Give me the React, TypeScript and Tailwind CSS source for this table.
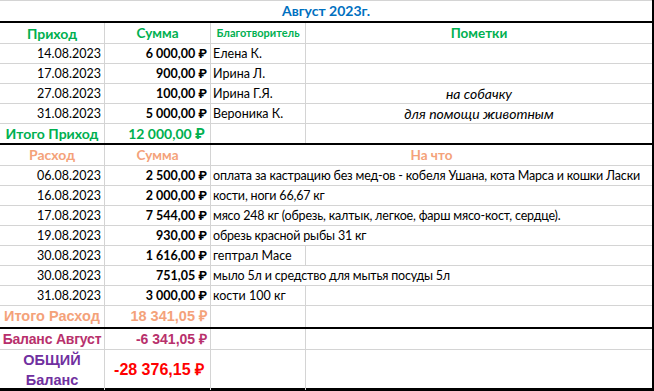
import React from "react";

const CAL = "font-['Lato','Roboto',sans-serif]";
const ARI = "font-['Liberation_Sans',Arial,sans-serif]";
const G = "border-[#d4d4d4]";
const COLS = "grid grid-cols-[105px_106px_95px_346px]";

const income = [
  ["14.08.2023", "6 000,00 ₽", "Елена К.", ""],
  ["17.08.2023", "900,00 ₽", "Ирина Л.", ""],
  ["27.08.2023", "100,00 ₽", "Ирина Г.Я.", "на собачку"],
  ["31.08.2023", "5 000,00 ₽", "Вероника К.", "для помощи животным"],
];

const expenses: [string, string, string, boolean][] = [
  ["06.08.2023", "2 500,00 ₽", "оплата за кастрацию без мед-ов - кобеля Ушана, кота Марса и кошки Ласки", true],
  ["16.08.2023", "2 000,00 ₽", "кости, ноги 66,67 кг", true],
  ["17.08.2023", "7 544,00 ₽", "мясо 248 кг (обрезь, калтык, легкое, фарш мясо-кост, сердце).", true],
  ["19.08.2023", "930,00 ₽", "обрезь красной рыбы 31 кг", true],
  ["30.08.2023", "1 616,00 ₽", "гептрал Масе", false],
  ["30.08.2023", "751,05 ₽", "мыло 5л и средство для мытья посуды 5л", true],
  ["31.08.2023", "3 000,00 ₽", "кости 100 кг", false],
];

export default function App() {
  return (
    <div className={`w-[654px] h-[391px] bg-white text-black ${CAL} overflow-hidden`}>
      <div className="w-[654px] border-r-2 border-black">
        {/* title */}
        <div className={`h-[23px] border-t ${G} border-b-2 border-b-black flex items-end justify-center pb-[2px]`}>
          <span className="text-[14px] font-bold text-[#0070c0] leading-none pb-[1px]">Август 2023г.</span>
        </div>
        {/* income header */}
        <div className={`${COLS} h-[21px] border-b ${G} text-[#00b050] font-bold`}>
          <div className={`border-r ${G} flex items-center justify-center text-[14px]`}>Приход</div>
          <div className={`border-r ${G} flex items-center justify-center text-[13.5px]`}>Сумма</div>
          <div className={`border-r ${G} flex items-center justify-center text-[11px] whitespace-nowrap`}>Благотворитель</div>
          <div className="flex items-center justify-center text-[13.5px]">Пометки</div>
        </div>
        {income.map((r, i) => (
          <div key={i} className={`${COLS} h-[20px] border-b ${G} text-[12.5px] leading-[19px]`}>
            <div className={`border-r ${G} text-right pr-[3px]`}>{r[0]}</div>
            <div className={`border-r ${G} text-right pr-[3px] font-bold`}>{r[1]}</div>
            <div className={`border-r ${G} pl-[2px] whitespace-nowrap`}>{r[2]}</div>
            <div className="text-center italic text-[14px]">{r[3]}</div>
          </div>
        ))}
        {/* total income */}
        <div className={`${COLS} h-[21px] border-b-2 border-black text-[#00b050] font-bold text-[14px] leading-[19px]`}>
          <div className={`border-r ${G} text-center whitespace-nowrap`}>Итого Приход</div>
          <div className={`border-r ${G} text-right pr-[5px] whitespace-nowrap`}>12 000,00 ₽</div>
          <div className={`border-r ${G}`}></div>
          <div></div>
        </div>
        {/* expense header */}
        <div className={`${COLS} h-[21px] border-b ${G} text-[#f4a27a] font-bold text-[13.5px] leading-[20px]`}>
          <div className={`border-r ${G} text-center text-[14px]`}>Расход</div>
          <div className={`border-r ${G} text-center`}>Сумма</div>
          <div className="col-span-2 text-center">На что</div>
        </div>
        {expenses.map((r, i) => (
          <div key={i} className={`${COLS} h-[20px] border-b ${G} text-[12.5px] leading-[19px]`}>
            <div className={`border-r ${G} text-right pr-[3px]`}>{r[0]}</div>
            <div className={`border-r ${G} text-right pr-[3px] font-bold`}>{r[1]}</div>
            {r[3] ? (
              <div className="col-span-2 pl-[2px] whitespace-nowrap tracking-[-0.18px]">{r[2]}</div>
            ) : (
              <>
                <div className={`border-r ${G} pl-[2px] whitespace-nowrap`}>{r[2]}</div>
                <div></div>
              </>
            )}
          </div>
        ))}
        {/* total expense */}
        <div className={`${COLS} h-[23px] border-b-2 border-black text-[#f4a27a] font-bold text-[14.5px] leading-[20px] ${ARI}`}>
          <div className={`border-r ${G} text-center whitespace-nowrap`}>Итого Расход</div>
          <div className={`border-r ${G} text-right pr-[3px] whitespace-nowrap`}>18 341,05 ₽</div>
          <div className={`border-r ${G}`}></div>
          <div></div>
        </div>
        {/* balance August */}
        <div className={`${COLS} h-[21px] border-b ${G} text-[#b8306c] font-bold text-[14px] leading-[20px] ${ARI}`}>
          <div className={`border-r ${G} text-center whitespace-nowrap tracking-[-0.2px]`}>Баланс Август</div>
          <div className={`border-r ${G} text-right pr-[3px] whitespace-nowrap`}>-6 341,05 ₽</div>
          <div className={`border-r ${G}`}></div>
          <div></div>
        </div>
        {/* total balance */}
        <div className={`${COLS} h-[41px] border-b-[3px] border-black font-bold ${ARI}`}>
          <div className={`border-r ${G} flex flex-col items-center justify-center text-[#7030a0] text-[14.5px] leading-[20px]`}>
            <span>ОБЩИЙ</span>
            <span>Баланс</span>
          </div>
          <div className={`border-r ${G} flex items-center justify-end pr-[6px] text-[#ff0000] text-[16px] whitespace-nowrap`}>-28 376,15 ₽</div>
          <div className={`border-r ${G}`}></div>
          <div></div>
        </div>
      </div>
    </div>
  );
}
